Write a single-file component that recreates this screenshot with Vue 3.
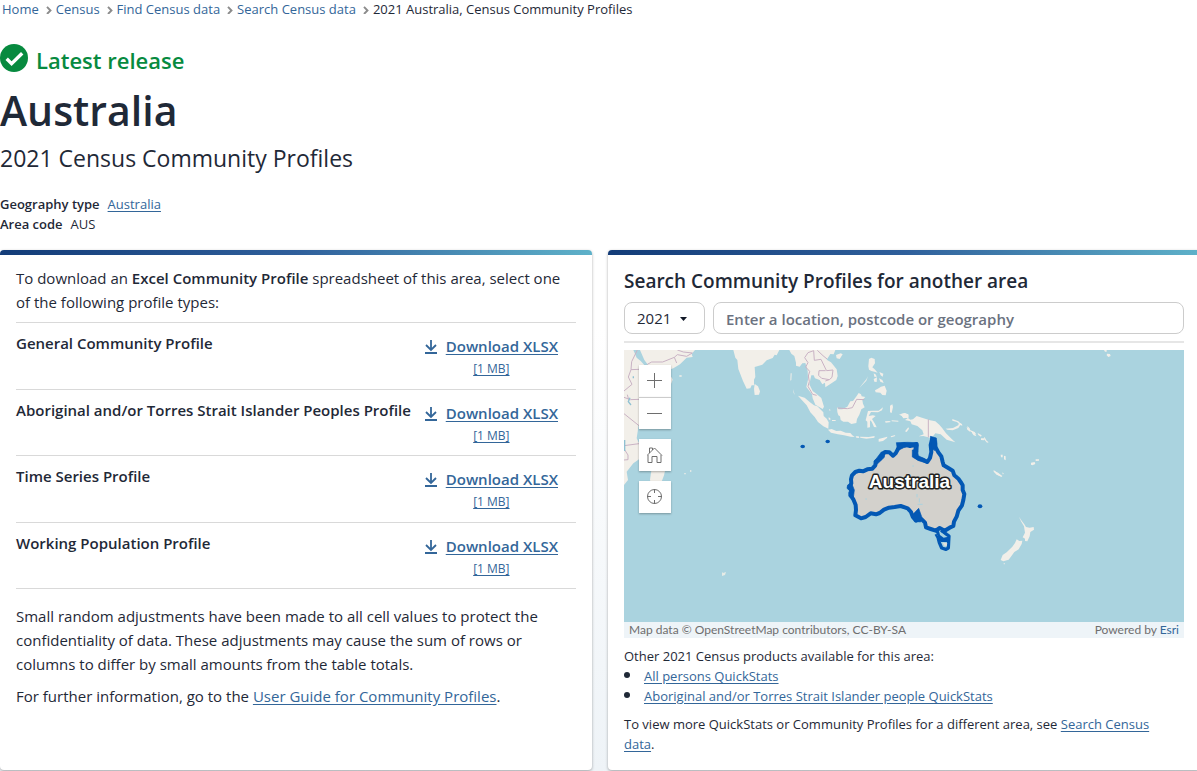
<script setup>
const crumbs = ['Home', 'Census', 'Find Census data', 'Search Census data']
const profiles = [
  'General Community Profile',
  'Aboriginal and/or Torres Strait Islander Peoples Profile',
  'Time Series Profile',
  'Working Population Profile'
]
</script>

<template>
  <div class="page">
    <nav aria-label="Breadcrumb">
      <ol class="crumbs">
        <li v-for="c in crumbs" :key="c">
          <a href="#">{{ c }}</a>
          <svg width="6" height="8" viewBox="0 0 6 8" aria-hidden="true"><path d="M1 .8 4.500 4.500 1 8" fill="none" stroke="#8c8c8c" stroke-width="1.900" /></svg>
        </li>
        <li aria-current="page">2021 Australia, Census Community Profiles</li>
      </ol>
    </nav>

    <header>
      <p class="latest">
        <svg width="28" height="28" viewBox="0 0 28 28" aria-hidden="true">
          <circle cx="14" cy="14" r="14" fill="#078a3f" />
          <path d="m6.700 14.800 4.900 4.800L22.200 9.200" fill="none" stroke="#fff" stroke-width="3.400" />
        </svg>
        <span>Latest release</span>
      </p>
      <h1>Australia</h1>
      <p class="subtitle">2021 Census Community Profiles</p>
      <dl class="meta">
        <div><dt>Geography type</dt><dd><a href="#">Australia</a></dd></div>
        <div><dt>Area code</dt><dd>AUS</dd></div>
      </dl>
    </header>

    <main class="cards">
      <section class="card">
        <p class="body">To download an <strong>Excel Community Profile</strong> spreadsheet of this area, select one of the following profile types:</p>
        <ul class="profiles">
          <li v-for="p in profiles" :key="p">
            <h3>{{ p }}</h3>
            <a href="#" class="download">
              <svg width="12" height="14" viewBox="0 0 12 14" aria-hidden="true"><path d="M6 0v9.500M1 5l5 5 5-5M0 13h12" fill="none" stroke="#336699" stroke-width="1.800" /></svg>
              <span class="label">Download XLSX</span>
              <span class="size">[1 MB]</span>
            </a>
          </li>
        </ul>
        <p class="body note">Small random adjustments have been made to all cell values to protect the confidentiality of data. These adjustments may cause the sum of rows or columns to differ by small amounts from the table totals.</p>
        <p class="body more">For further information, go to the <a href="#">User Guide for Community Profiles</a>.</p>
      </section>

      <section class="card">
        <h2>Search Community Profiles for another area</h2>
        <form class="search" @submit.prevent>
          <div class="year">
            <select aria-label="Census year"><option>2021</option></select>
            <svg width="7" height="4" viewBox="0 0 7 4" aria-hidden="true"><path d="M0 0h7L3.500 4z" fill="#111827" /></svg>
          </div>
          <input type="text" aria-label="Location" placeholder="Enter a location, postcode or geography" />
        </form>
        <div class="map">
          <svg class="world" viewBox="0 0 560 272" preserveAspectRatio="xMidYMid slice" role="img" aria-label="Map of Australia">
            <rect width="560" height="272" fill="#aad3df" />
            <g transform="translate(-4 -5) scale(.33333)">
              <g fill="#f2efe9">
                <path d="M12 15H40L50 38 62 48 75 62 85 98 125 103 155 97 158 104 148 130 110 170 75 215 56 240 50 280 60 300 58 342 40 355 20 380 24 405 12 420Z" />
                <path d="M60 15H225L215 27 218 36 200 38 180 58 160 70 125 82 92 90 86 62 73 45Z" />
                <path d="M340 15 346 38 352 45 355 72 369 108 380 131 391 130 395 121 402 121 402 104 406 96 404 66 427 59 440 46 458 39 464 29 470 31 478 15Z" />
                <path d="M404 117 414 124 420 139 417 149 404 150 402 132Z" />
                <path d="M95 370H137L132 391 126 407 100 450 90 404Z" />
                <path d="M178 91h7v4h-7zM193 384h4v4h-4zM210 376h4v4h-4zM512 85l3 0-1 20-3 2zM519 132l3 9 2 9-3-6z" />
              </g>
              <path d="M82 58 95 51H128L163 37 172 29 200 34 217 24 190 21 172 15M163 37 170 54M52 15 35 50 33 74 57 73M33 74 25 96 36 118 12 138M12 157 31 164 57 163M26 164 22 149M12 206 57 242M12 302 57 296M13 313 24 330 24 344 12 345" fill="none" stroke="#c9b2c4" stroke-width="3" />
              <path d="M30 158 25 170 33 180M14 285V318M40 94V100" fill="none" stroke="#8fc1d2" stroke-width="4" />
            </g>
            <g transform="translate(156 -5) scale(.33333)">
              <g fill="#f2efe9">
                <path d="M28 15 34 26 43 33 48 53 48 62 59 65 67 55 76 54 83 78 84 104 79 126 96 148 98 160 106 179 128 192 132 185 124 159 107 145 98 138 88 118 94 91 101 91 105 100 119 105 127 118 135 113 136 127 151 117 169 105 173 93 170 73 153 52 140 44 151 27 161 28 166 15Z" />
                <path d="M168 30 182 25 188 28 179 42 170 40Z" />
                <path d="M54 152 74 158 90 172 102 181 112 184 130 202 131 213 140 221 146 232 145 251 130 244 114 231 104 216 91 202 80 181 66 166Z" />
                <path d="M144 254 155 252 169 258 182 257 197 263 211 264 217 271 224 276 212 275 192 271 174 268 153 263Z" />
                <path d="M171 186 176 193 187 193 202 185 211 169 219 168 230 153 236 144 243 148 245 154 256 156 247 165 249 176 254 187 244 193 238 209 231 222 229 234 214 237 204 230 190 230 182 225 180 214 175 211 172 201Z" />
                <path d="M264 198 278 197 296 197 309 187 306 196 294 202 273 201 266 213 279 211 287 213 276 222 284 235 290 247 282 246 275 230 270 226 270 247 262 248 262 230 257 226Z" />
                <path d="M267 42 274 38 284 42 285 55 277 67 284 73 293 83 283 80 274 78 267 74 265 64Z" />
                <path d="M281 85 288 89 290 96 283 95ZM298 81 310 86 308 95 302 91ZM281 102 291 97 290 111 283 110ZM297 100 307 105 311 114 301 110ZM285 136 296 130 303 125 314 122 320 137 317 151 307 150 301 143 287 142Z" />
                <path d="M264 94 259 103 249 115 238 129 246 121 259 107ZM330 182l7-4 2 8-4 18-5-2zM315 229l13-1 5 3-16 2zM335 226l20 1v3l-20-1zM227 274l9 0 2 5-9-1zM240 275l26 1 18-3-1 5-24 3-18-3zM296 282l26-7-1 4-12 9-13 2zM332 274l14-4-2 4-10 3zM375 259l10-12 2 4-7 10zM357 209l16-5 12 4 1 10-16 2-5-8z" />
                <path d="M361 207 376 205 385 210 384 219 391 224 399 223 410 213 426 218 450 226 466 229 478 239 487 250 498 265 516 283 526 292 500 284 482 268 466 265 459 274 450 278 430 273 416 274 431 268 427 256 412 243 395 238 391 229 375 225 383 220 366 214Z" />
                <path d="M497 251 519 249 535 241 537 234 541 240 535 249 518 256 502 254ZM517 222l18 7 9 9-4 1-9-8-14-4zM562 243l7 7 2 7-8-8zM570 255l14 6 5 7-17-8zM146 217l5 3v6l-5-3zM156 225h11v3h-11zM148 191l4 5-4 1z" />
              </g>
              <path d="M101 17 84 23 74 38 84 53 77 66 89 79 85 93 88 110 84 124 98 148 110 151M101 17 103 46 123 43 137 72 140 77 159 75 156 97 148 104 136 108M117 77 116 91 125 100 148 104M117 77 137 77M112 16 129 32 141 42M173 189 202 191 217 188 230 163 253 164M445 223V277" fill="none" stroke="#c9b2c4" stroke-width="3" />
            </g>
            <g transform="translate(336 -5) scale(.33333)" fill="#f2efe9">
              <path d="M0 234 6 237 7 242 0 240ZM20 246 32 256 30 260 22 254ZM36 259l9 6 4 9-8-3-5-7zM53 264l12 7-2 4-8-5zM63 280l9 0v6l-9-1zM73 275l7 12 6 5-5 1-9-10zM122 329h6v8h-5zM132 332l5 2 0 12-5-3zM101 375l17 13 1 4-9-3-9-9zM127 382l5 5-4 1zM213 353l11-2 2 6-9 4-4-2zM227 343h10v4l-10 1zM441 26l9 1 2 6-7 3-5-5zM432 15h8v5l-5 0z" />
            </g>
            <g transform="translate(206 80) scale(.33333)">
              <path d="M567 260 575 272 583 283 588 291 599 293 611 291 612 299 601 306 599 319 592 334 585 333 585 326 578 322 585 308 582 289 573 274Z" fill="#f2efe9" />
              <path d="M560 328 568 333 577 332 575 342 566 358 553 366 546 376 536 389 520 394 512 390 518 375 530 367 547 350 555 339Z" fill="#f2efe9" />
              <path d="M492 123 504 128 517 138 514 141 501 134ZM521 399l4 1-3 4z" fill="#f2efe9" />
              <path d="M63 148 66 136 76 126 88 122 99 124 112 118 127 116 136 106 137 95 150 86 155 76 165 66 178 67 189 77 197 70 204 57 209 46 224 43 240 48 260 42 256 60 254 77 266 86 279 89 292 96 300 84 304 66 302 45 306 28 314 34 317 52 325 67 334 79 338 96 341 106 356 115 368 122 373 136 385 146 394 159 398 166 398 180 403 192 400 210 396 226 385 242 380 260 372 275 370 288 359 293 344 302 329 294 317 302 302 297 288 292 285 278 273 266 258 272 248 260 243 246 233 235 212 228 194 231 177 233 162 239 149 249 138 253 122 250 107 261 93 265 76 256 78 240 77 225 70 208 62 196 65 183 58 171 64 160Z" fill="#d3d1cc" stroke="#0358b4" stroke-width="12" stroke-linejoin="round" />
              <path d="m246 256 20-21 9 25-3 16-18-2zM132 95l22-29 11-2-2 18-22 21zM199 38l34-1 26 1 6 7-1 22-10 5-1-20-14-3-18 4-12 6-7-3zM301 19l18 5 2 18-8 20-8-8zM247 60l15-1 3 18 27 14-1 9-25-8-19-11zM53 165l12-5 8 20-3 24-13-4-1-12 3-6-8-7z" fill="#0358b4" stroke="#0358b4" stroke-width="2" stroke-linejoin="round" />
              <path d="M318 312 324 322 328 338 335 354 348 358 355 354 356 334 357 318 350 313 342 307 333 301" fill="#aad3df" stroke="#0358b4" stroke-width="10" stroke-linejoin="round" />
              <path d="m326 303 21 16-2 9-15-2-12-16z" fill="#aad3df" />
              <path d="m316 304 11-1 3 12 11 8 14-3 4 7-6 9h-21l-6-12z" fill="#0358b4" />
              <path d="m338 338 14 2-2 8-7-1z" fill="#e3e0da" />
              <path d="M261 192v10M268 205v12M263 223h15M247 108h5M106 207h5" stroke="#aad3df" stroke-width="3" />
              <ellipse cx="450" cy="229" rx="7" ry="6" fill="#0358b4" />
            </g>
            <g fill="#0358b4"><ellipse cx="178.700" cy="96.500" rx="2.300" ry="1.800" /><ellipse cx="203.700" cy="91.500" rx="2.200" ry="1.700" /></g>
            <path d="m98 222 1 1 3-1-1 3-3 1zM411 207l1-1z" fill="#e6ebe6" />
            <text x="285.500" y="138" text-anchor="middle" class="place">Australia</text>
          </svg>
          <div class="tools">
            <div class="zoom">
              <button type="button" aria-label="Zoom in"><svg width="16" height="16" viewBox="0 0 16 16"><path d="M0 7.500h15M7.500 0v15" /></svg></button>
              <button type="button" aria-label="Zoom out"><svg width="16" height="16" viewBox="0 0 16 16"><path d="M0 7.500h15" /></svg></button>
            </div>
            <button type="button" aria-label="Default view"><svg width="16" height="16" viewBox="0 0 16 16"><path d="M0 8.500 7.500 1 15 8.500M2.500 6v-5h3v2M1 8v7.500h4v-6h5v6h4V8" /></svg></button>
            <button type="button" aria-label="Find my location"><svg width="16" height="16" viewBox="0 0 16 16"><circle cx="7.500" cy="7.500" r="7" /><path d="M7.500 0v4M7.500 11v4M0 7.500h4M11 7.500h4" /></svg></button>
          </div>
          <div class="attribution"><span>Map data © OpenStreetMap contributors, CC-BY-SA</span><span>Powered by <a href="#">Esri</a></span></div>
        </div>
        <div class="products">
          <p>Other 2021 Census products available for this area:</p>
          <ul>
            <li><a href="#">All persons QuickStats</a></li>
            <li><a href="#">Aboriginal and/or Torres Strait Islander people QuickStats</a></li>
          </ul>
          <p class="elsewhere">To view more QuickStats or Community Profiles for a different area, see <a href="#">Search Census data</a>.</p>
        </div>
      </section>
    </main>
  </div>
</template>

<style>
body { overflow: hidden; background: #fff; }
</style>

<style scoped>
.page { margin-right: -3px; font: 13px/20px "Segoe UI", "Open Sans", "Noto Sans", sans-serif; color: #1f2937; }
* { box-sizing: border-box; }
p, h1, h2, h3, ul, ol, dl, dd { margin: 0; padding: 0; }
ul, ol { list-style: none; }
a { color: #336699; text-underline-offset: 2px; }
.crumbs { display: flex; padding-left: 2px; line-height: 18px; }
.crumbs li { display: flex; align-items: center; }
.crumbs a { text-decoration: none; }
.crumbs svg { margin: 2px 4px 0 7px; }
.latest { display: flex; gap: 8px; padding-top: 26px; font-size: 22px; font-weight: 600; line-height: 32px; color: #078a3f; }
.latest svg { flex: none; }
h1 { margin-top: 8px; font-size: 41px; font-weight: 600; line-height: 52px; }
.subtitle { margin-top: 6px; font-size: 23px; line-height: 32px; }
.meta { margin-top: 20px; }
.meta div { display: flex; gap: 8px; }
dt { font-weight: 600; }
.cards { display: grid; grid-template-columns: 1fr 1fr; gap: 16px; margin-top: 16px; padding-bottom: 1px; background: linear-gradient(#fff 15%, #eef3f7); }
.card { min-width: 0; padding: 0 16px 16px; background: #fff; border-radius: 4px; box-shadow: 0 1px 3px #00000055; overflow: hidden; }
.card::before { content: ""; display: block; height: 5px; margin: 0 -16px 11px; background: linear-gradient(90deg, #133c78, #2f5f9b 50%, #5eb1c9); }
.body { font-size: 15px; line-height: 24px; }
strong { font-weight: 600; }
.profiles { margin-top: 8px; border-top: 1px solid #d9d9d9; }
.profiles li { display: flex; justify-content: space-between; min-height: 67px; border-bottom: 1px solid #d9d9d9; }
.profiles li:nth-child(even) { min-height: 66px; }
h3 { padding-top: 8px; font-size: 15px; font-weight: 600; line-height: 24px; }
.download { display: grid; grid-template-columns: 12px auto; gap: 1px 9px; align-content: start; padding: 11px 18px 0 0; text-decoration: none; }
.download svg { margin-top: 6px; }
.label { font-size: 15px; font-weight: 600; line-height: 24px; text-decoration: underline; }
.size { grid-column: 1 / -1; justify-self: center; font-size: 12px; text-decoration: underline; }
.note { margin-top: 15px; }
.more { margin-top: 8px; }
h2 { margin-top: 12px; font-size: 19px; font-weight: 600; line-height: 28px; }
.card:has(h2)::before { margin-bottom: 0; }
.search { display: flex; gap: 8px; margin-top: 7px; padding-bottom: 7px; border-bottom: 2px solid #e6e6e6; }
.year { position: relative; }
.year svg { position: absolute; right: 18px; top: 15px; pointer-events: none; }
select, input { height: 32px; padding: 0 12px; font-family: inherit; color: #1f2937; background: #fff; border: 1px solid #ccc; border-radius: 8px; }
select { width: 81px; appearance: none; font-size: 15px; }
input { flex: 1; min-width: 0; padding-top: 2px; font-size: 15px; font-weight: 600; }
input::placeholder { color: #6b7280; opacity: 1; }
.map { position: relative; margin-top: 7px; }
.world { display: block; width: 100%; height: 272px; }
.place { font: bold 19px "Liberation Sans", Arial, sans-serif; fill: #fff; stroke: #222; stroke-width: 3px; paint-order: stroke; stroke-linejoin: round; }
.tools { position: absolute; top: 15px; left: 15px; display: grid; gap: 10px; }
.tools button { display: grid; place-items: center; width: 32px; height: 32px; padding: 0; background: #fff; border: 0; box-shadow: 0 1px 2px #0000004d; }
.tools svg { fill: none; stroke: #6e6e6e; stroke-width: 1px; }
.zoom button + button { border-top: 1px solid #ccc; }
.attribution { display: flex; justify-content: space-between; padding: 0 5px; font-family: Lato, sans-serif; font-size: 12px; line-height: 16px; color: #6e6e6e; background: #eef4f8; }
.attribution a { text-decoration: none; }
.products { padding-top: 8px; }
.products li { display: flex; gap: 14px; }
.products li::before { content: ""; width: 6px; height: 6px; margin-top: 6px; background: #1f2937; border-radius: 50%; }
.elsewhere { margin-top: 8px; padding-right: 16px; }
</style>
